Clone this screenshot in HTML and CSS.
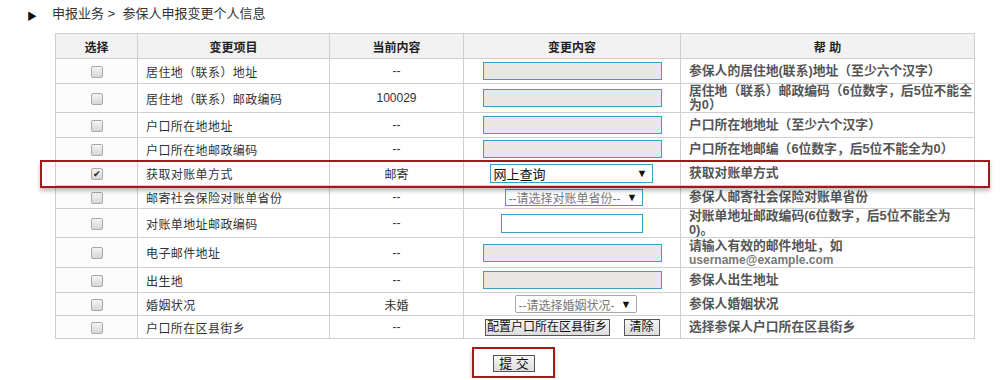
FILE: index.html
```html
<!DOCTYPE html>
<html lang="zh-CN">
<head>
    <meta charset="UTF-8">
    <title>参保人申报变更个人信息</title>
    <link rel="stylesheet" href="styles.css">
</head>
<body>
    <div class="crumb">
        <span class="crumb-arrow">&#9654;</span>
        <span>申报业务 &gt;&nbsp; 参保人申报变更个人信息</span>
    </div>

    <div class="form-wrap">
        <table class="grid">
            <colgroup>
                <col class="c-sel"><col class="c-item"><col class="c-cur"><col class="c-new"><col class="c-help">
            </colgroup>
            <thead>
                <tr><th>选择</th><th>变更项目</th><th>当前内容</th><th>变更内容</th><th>帮&nbsp;助</th></tr>
            </thead>
            <tbody>
                <tr class="r25">
                    <td class="sel"><span class="chk"></span></td>
                    <td class="item">居住地（联系）地址</td>
                    <td class="cur">--</td>
                    <td class="new"><span class="inp inp-gray"></span></td>
                    <td class="help">参保人的居住地(联系)地址（至少六个汉字）</td>
                </tr>
                <tr class="r29">
                    <td class="sel"><span class="chk"></span></td>
                    <td class="item">居住地（联系）邮政编码</td>
                    <td class="cur">100029</td>
                    <td class="new"><span class="inp inp-gray"></span></td>
                    <td class="help">居住地（联系）邮政编码（6位数字，后5位不能全为0）</td>
                </tr>
                <tr class="r25">
                    <td class="sel"><span class="chk"></span></td>
                    <td class="item">户口所在地地址</td>
                    <td class="cur">--</td>
                    <td class="new"><span class="inp inp-gray"></span></td>
                    <td class="help">户口所在地地址（至少六个汉字）</td>
                </tr>
                <tr class="r23">
                    <td class="sel"><span class="chk"></span></td>
                    <td class="item">户口所在地邮政编码</td>
                    <td class="cur">--</td>
                    <td class="new"><span class="inp inp-gray"></span></td>
                    <td class="help">户口所在地邮编（6位数字，后5位不能全为0）</td>
                </tr>
                <tr class="r25">
                    <td class="sel"><span class="chk checked">&#10004;</span></td>
                    <td class="item">获取对账单方式</td>
                    <td class="cur">邮寄</td>
                    <td class="new"><span class="dd dd-way"><span class="dd-text">网上查询</span><span class="dd-arrow">&#9660;</span></span></td>
                    <td class="help">获取对账单方式</td>
                </tr>
                <tr class="r23">
                    <td class="sel"><span class="chk"></span></td>
                    <td class="item">邮寄社会保险对账单省份</td>
                    <td class="cur">--</td>
                    <td class="new"><span class="dd dd-prov"><span class="dd-text">--请选择对账单省份--</span><span class="dd-arrow">&#9660;</span></span></td>
                    <td class="help">参保人邮寄社会保险对账单省份</td>
                </tr>
                <tr class="r29">
                    <td class="sel"><span class="chk"></span></td>
                    <td class="item">对账单地址邮政编码</td>
                    <td class="cur">--</td>
                    <td class="new"><span class="inp inp-white"></span></td>
                    <td class="help">对账单地址邮政编码(6位数字，后5位不能全为0)。</td>
                </tr>
                <tr class="r30">
                    <td class="sel"><span class="chk"></span></td>
                    <td class="item">电子邮件地址</td>
                    <td class="cur">--</td>
                    <td class="new"><span class="inp inp-gray"></span></td>
                    <td class="help">请输入有效的邮件地址，如<span class="mail">username@example.com</span></td>
                </tr>
                <tr class="r25">
                    <td class="sel"><span class="chk"></span></td>
                    <td class="item">出生地</td>
                    <td class="cur">--</td>
                    <td class="new"><span class="inp inp-gray"></span></td>
                    <td class="help">参保人出生地址</td>
                </tr>
                <tr class="r23">
                    <td class="sel"><span class="chk"></span></td>
                    <td class="item">婚姻状况</td>
                    <td class="cur">未婚</td>
                    <td class="new"><span class="dd dd-marry"><span class="dd-text">--请选择婚姻状况-</span><span class="dd-arrow">&#9660;</span></span></td>
                    <td class="help">参保人婚姻状况</td>
                </tr>
                <tr class="r23">
                    <td class="sel"><span class="chk"></span></td>
                    <td class="item">户口所在区县街乡</td>
                    <td class="cur">--</td>
                    <td class="new"><span class="btn btn-wide">配置户口所在区县街乡</span><span class="btn btn-clear">清除</span></td>
                    <td class="help">选择参保人户口所在区县街乡</td>
                </tr>
            </tbody>
        </table>
        <div class="mark-row"></div>
    </div>

    <div class="submit-bar">
        <div class="submit-mark">
            <span class="btn btn-submit">提&nbsp;交</span>
        </div>
    </div>
</body>
</html>
```

FILE: styles.css
```css
body {
    margin: 0;
    font-family: "Liberation Sans", "Noto Sans CJK SC", sans-serif;
    font-size: 12px;
    color: #333;
    background: #fff;
}
.crumb {
    display: flex;
    align-items: center;
    height: 24px;
    padding-left: 27px;
    font-size: 13px;
    color: #333;
}
.crumb-arrow {
    font-size: 10px;
    width: 25px;
    margin-top: 6px;
    color: #111;
}
.form-wrap {
    position: relative;
    margin: 9px 0 0 55px;
    width: 919px;
}
.grid {
    border-collapse: collapse;
    table-layout: fixed;
    width: 919px;
}
.c-sel { width: 82px; }
.c-item { width: 192px; }
.c-cur { width: 134px; }
.c-new { width: 217px; }
.c-help { width: 294px; }
.grid th, .grid td {
    border: 1px solid #cfcfcf;
    padding: 0;
    vertical-align: middle;
}
.grid th {
    height: 24px;
    background: #f2f2f2;
    font-weight: bold;
    font-size: 12px;
    color: #222;
    text-align: center;
}
.r23 td { height: 22px; }
.r25 td { height: 24px; }
.r29 td { height: 28px; }
.r30 td { height: 29px; }
.sel {
    text-align: center;
    background: #fcfcfc;
}
.chk {
    display: inline-block;
    width: 10px;
    height: 10px;
    border: 1px solid #a9a9a9;
    border-radius: 2px;
    background: linear-gradient(#f4f4f4, #d6d6d6);
    vertical-align: middle;
    font-size: 9px;
    line-height: 10px;
    color: #222;
    text-align: center;
}
.item {
    padding-left: 8px !important;
    letter-spacing: 0.4px;
    color: #333;
}
.cur {
    text-align: center;
    color: #333;
}
.new {
    text-align: center;
    font-size: 0;
}
.help {
    padding-left: 8px !important;
    font-weight: bold;
    font-size: 12.8px;
    line-height: 14px;
    color: #555;
}
.mail {
    display: block;
    margin-top: 1px;
    font-size: 12px;
    line-height: 13px;
    color: #777;
}
.inp {
    display: inline-block;
    box-sizing: border-box;
    height: 18px;
    vertical-align: middle;
    border: 1px solid #3a9fc6;
}
.inp-gray {
    width: 179px;
    margin-left: 1px;
    background: #e8e7e3;
}
.inp-white {
    width: 142px;
    height: 19px;
    background: #fff;
}
.dd {
    display: inline-flex;
    align-items: center;
    justify-content: space-between;
    box-sizing: border-box;
    vertical-align: middle;
    background: #fff;
    font-size: 12px;
    color: #777;
    padding: 0 4px 0 3px;
}
.dd-arrow {
    font-size: 11px;
    line-height: 11px;
    color: #111;
}
.dd-way {
    width: 163px;
    height: 19px;
    margin-left: -2px;
    border: 1px solid #3a9fc6;
    font-size: 13px;
    color: #111;
}
.dd-prov {
    width: 138px;
    height: 17px;
    margin-left: 3px;
    border: 1px solid #3a9fc6;
}
.dd-marry {
    width: 122px;
    height: 18px;
    margin-left: 7px;
    border: 1px solid #a8a8a8;
    border-radius: 2px;
}
.btn {
    display: inline-block;
    box-sizing: border-box;
    height: 17px;
    line-height: 15px;
    vertical-align: middle;
    border: 1px solid #555;
    background: linear-gradient(#f7f7f7, #dcdcdc);
    font-size: 12px;
    color: #111;
    text-align: center;
}
.btn-wide {
    width: 125px;
}
.btn-clear {
    width: 36px;
    margin-left: 14px;
}
.mark-row {
    position: absolute;
    left: -15px;
    top: 127px;
    width: 946px;
    height: 24px;
    border: 2px solid #a31818;
    box-shadow: 0 3px 4px rgba(0, 0, 0, 0.25);
    pointer-events: none;
}
.submit-bar {
    width: 919px;
    margin-left: 55px;
    display: flex;
    justify-content: center;
    padding-top: 8px;
}
.submit-mark {
    box-sizing: border-box;
    width: 83px;
    height: 31px;
    border: 2px solid #a31818;
    box-shadow: 0 3px 4px rgba(0, 0, 0, 0.25);
    padding: 6px 0 0 19px;
    margin-left: -2px;
}
.btn-submit {
    width: 42px;
    height: 17px;
    display: block;
    font-size: 13px;
}
```
